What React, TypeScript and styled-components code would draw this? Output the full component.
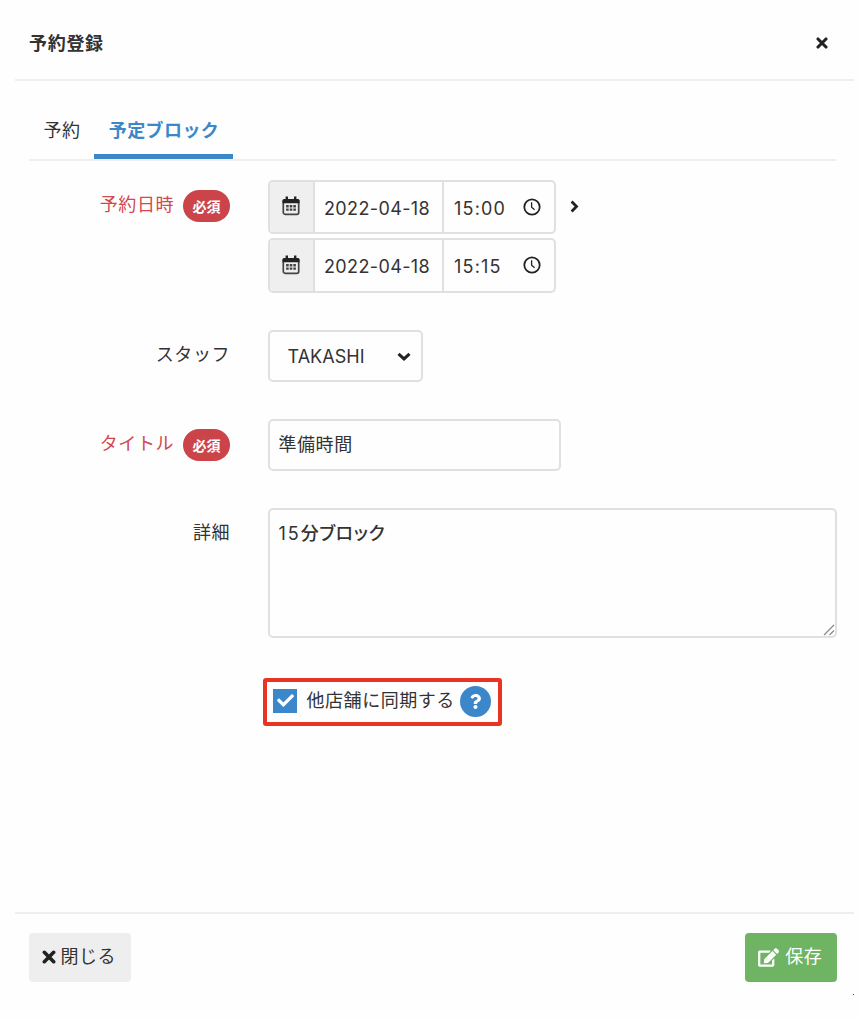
import React from "react";
import styled, { createGlobalStyle } from "styled-components";
import { FaCheck, FaEdit, FaQuestion } from "react-icons/fa";

const GlobalStyle = createGlobalStyle`
  *, *::before, *::after { box-sizing: border-box; }
  body { margin: 0; background: #fefefe; }
`;

const Dialog = styled.main`
  position: relative;
  display: flex;
  flex-direction: column;
  width: 839px;
  height: 1018px;
  margin-left: 15px;
  color: #333;
  font-family: Inter, "Noto Sans CJK JP", sans-serif;
  font-size: 18px;
  line-height: 26px;
  letter-spacing: 0.55px;
  white-space: nowrap;
`;

const Header = styled.header`
  display: flex;
  align-items: center;
  justify-content: space-between;
  height: 81px;
  padding: 7px 26px 0 14px;
  border-bottom: 2px solid #eee;
`;

const Title = styled.h1`
  margin: 0;
  padding-top: 2px;
  font-size: 18px;
  font-weight: 700;
  letter-spacing: 0.7px;
`;

const IconButton = styled.button`
  display: flex;
  padding: 0 0.5px 1px 0;
  border: 0;
  background: none;
  color: #222;
`;

const Tabs = styled.nav`
  display: flex;
  height: 80px;
  margin: 0 18px 0 14px;
  padding-top: 29px;
  border-bottom: 2px solid #eee;
`;

const Tab = styled.a<{ $active?: boolean }>`
  height: 49px;
  padding: 8px 14px 0 14.5px;
  color: ${(p) => (p.$active ? "#3c87c9" : "#333")};
  font-weight: ${(p) => (p.$active ? 700 : 400)};
  letter-spacing: 0.4px;
  border-bottom: ${(p) => (p.$active ? "5px solid #3c87c9" : "0")};
`;

const Form = styled.form`
  display: flex;
  flex-direction: column;
  flex: 1;
  gap: 37px;
  padding: 18.5px 17px 0 0;
`;

const Field = styled.div`
  display: grid;
  grid-template-columns: 215px 1fr;
  column-gap: 37.5px;
  align-items: start;
`;

const Label = styled.label<{ $required?: boolean }>`
  display: flex;
  justify-content: flex-end;
  gap: 9px;
  padding-top: 12px;
  color: ${(p) => (p.$required ? "#d2484f" : "#333")};
`;

const Badge = styled.span`
  width: 47px;
  height: 32px;
  margin-top: -2px;
  border-radius: 16px;
  background: #cb444a;
  color: #fff;
  font-size: 14px;
  font-weight: 700;
  line-height: 33px;
  letter-spacing: 0;
  text-align: center;
`;

const DateRange = styled.div`
  display: flex;
  gap: 14px;
`;

const DateList = styled.div`
  display: flex;
  flex-direction: column;
  gap: 4px;
`;

const DateGroup = styled.div`
  display: flex;
  width: 288px;
  height: 54.5px;
  border: 2px solid #e0e0e0;
  border-radius: 5px;
  overflow: hidden;
`;

const CalendarBox = styled.span`
  display: flex;
  align-items: center;
  justify-content: center;
  width: 45px;
  padding-bottom: 1px;
  background: #efefef;
  border-right: 2px solid #e0e0e0;
`;

const DateValue = styled.span`
  display: flex;
  align-items: center;
  width: 129px;
  padding: 4px 0 0 9.5px;
  border-right: 2px solid #e0e0e0;
  letter-spacing: 0.38px;
`;

const TimeValue = styled.span`
  display: flex;
  flex: 1;
  align-items: center;
  justify-content: space-between;
  padding: 4px 13px 0 10.5px;
  letter-spacing: 1.2px;

  svg { margin-top: -4px; }
`;

const RangeMark = styled.span`
  display: flex;
  padding-top: 20px;
  color: #222;
`;

const Select = styled.div`
  display: flex;
  align-items: center;
  justify-content: space-between;
  width: 155px;
  height: 52px;
  padding: 2px 10px 0 18px;
  border: 2px solid #e0e0e0;
  border-radius: 5px;
  letter-spacing: 0.05px;
`;

const TextBox = styled.div<{ $width: number; $height: number; $medium?: boolean }>`
  position: relative;
  width: ${(p) => p.$width}px;
  height: ${(p) => p.$height}px;
  padding: 11px 9px;
  border: 2px solid #e0e0e0;
  border-radius: 5px;
  font-weight: ${(p) => (p.$medium ? 500 : 400)};
  font-feature-settings: ${(p) => (p.$medium ? '"palt"' : "normal")};
`;

const Digits = styled.span`
  font-weight: 400;
  letter-spacing: 2px;
`;

const Grip = styled.svg`
  position: absolute;
  right: 0;
  bottom: 0;
`;

const SyncOption = styled.label`
  display: flex;
  align-items: center;
  width: 239px;
  height: 48px;
  margin: 3px 0 0 248px;
  padding: 0 0 2px 6px;
  border: 4px solid #e93323;
  border-radius: 3px;
`;

const Checkbox = styled.span`
  display: flex;
  align-items: center;
  justify-content: center;
  width: 24px;
  height: 24px;
  margin-right: 9.5px;
  background: #3c87c9;
  color: #fff;
  font-size: 17px;
`;

const HelpBadge = styled.span`
  display: flex;
  align-items: center;
  justify-content: center;
  width: 31px;
  height: 31px;
  margin: 1px 0 0 5.5px;
  border-radius: 50%;
  background: #3c87c9;
  color: #fff;
  font-size: 15px;
`;

const Footer = styled.footer`
  display: flex;
  justify-content: space-between;
  height: 106px;
  padding: 19px 17.5px 0 13.5px;
  border-top: 2px solid #eee;
`;

const Button = styled.button<{ $primary?: boolean }>`
  display: flex;
  align-items: center;
  justify-content: center;
  gap: ${(p) => (p.$primary ? 6 : 4)}px;
  width: ${(p) => (p.$primary ? 92 : 102)}px;
  height: 48.5px;
  padding: 0 0.5px 0.5px 0;
  border: 0;
  border-radius: 4px;
  background: ${(p) => (p.$primary ? "#6eb462" : "#eee")};
  color: ${(p) => (p.$primary ? "#fff" : "#333")};
  font: inherit;
  letter-spacing: 0.55px;
`;

const CornerMark = styled.span`
  position: absolute;
  right: 0;
  top: 994px;
  width: 1px;
  height: 1px;
  background: #555;
`;

const CalendarIcon = () => (
  <svg width="18" height="20" viewBox="0 0 18 20" fill="none">
    <rect x="1.3" y="3.8" width="15.4" height="14.5" rx="1.8" stroke="#444" strokeWidth="1.7" />
    <path d="M.5 7.2V4.6Q.5 3 2.1 3h13.8Q17.5 3 17.5 4.6V7.2Z" fill="#222" />
    <path d="M4.8 .6v4M13.2 .6v4" stroke="#222" strokeWidth="2.4" />
    <path d="M4.1 10.3h10M4.1 13.6h10" stroke="#444" strokeWidth="2.4" strokeDasharray="2.6 1" />
  </svg>
);

const ClockIcon = () => (
  <svg width="18" height="18" viewBox="0 0 18 18" fill="none" stroke="#222">
    <circle cx="9" cy="9" r="7.7" strokeWidth="1.8" />
    <path d="M8.6 4.2v5l3 2.5" strokeWidth="1.3" />
  </svg>
);

const CrossIcon = ({ size }: { size: number }) => (
  <svg width={size} height={size} viewBox="0 0 12 12" stroke="#222" strokeWidth="3.1" strokeLinecap="round">
    <path d="M2 2l8 8M10 2l-8 8" />
  </svg>
);

const ChevronRight = () => (
  <svg width="9" height="13" viewBox="0 0 9 13" fill="none" stroke="#222" strokeWidth="2.8">
    <path d="M1.6 1.5 6.5 6.5 1.6 11.5" />
  </svg>
);

const ChevronDown = () => (
  <svg width="14" height="9" viewBox="0 0 14 9" fill="none" stroke="#222" strokeWidth="3">
    <path d="M1.5 1.8 7 6.9 12.5 1.8" />
  </svg>
);

const DateTime = ({ date, time }: { date: string; time: string }) => (
  <DateGroup>
    <CalendarBox><CalendarIcon /></CalendarBox>
    <DateValue>{date}</DateValue>
    <TimeValue>{time}<ClockIcon /></TimeValue>
  </DateGroup>
);

export default function App() {
  return (
    <>
      <GlobalStyle />
      <Dialog>
        <Header>
          <Title>予約登録</Title>
          <IconButton aria-label="close"><CrossIcon size={12} /></IconButton>
        </Header>
        <Tabs>
          <Tab>予約</Tab>
          <Tab $active>予定ブロック</Tab>
        </Tabs>
        <Form>
          <Field>
            <Label $required>予約日時<Badge>必須</Badge></Label>
            <DateRange>
              <DateList>
                <DateTime date="2022-04-18" time="15:00" />
                <DateTime date="2022-04-18" time="15:15" />
              </DateList>
              <RangeMark><ChevronRight /></RangeMark>
            </DateRange>
          </Field>
          <Field>
            <Label>スタッフ</Label>
            <Select>TAKASHI<ChevronDown /></Select>
          </Field>
          <Field>
            <Label $required>タイトル<Badge>必須</Badge></Label>
            <TextBox $width={293} $height={52}>準備時間</TextBox>
          </Field>
          <Field>
            <Label>詳細</Label>
            <TextBox $width={569} $height={130} $medium>
              <Digits>15</Digits>分ブロック
              <Grip width="12" height="12" viewBox="0 0 12 12" stroke="#888" strokeWidth="1.2">
                <path d="M1 11 11 1M6.5 11 11 6.5" />
              </Grip>
            </TextBox>
          </Field>
          <SyncOption>
            <Checkbox><FaCheck /></Checkbox>
            他店舗に同期する
            <HelpBadge><FaQuestion /></HelpBadge>
          </SyncOption>
        </Form>
        <Footer>
          <Button><CrossIcon size={14} />閉じる</Button>
          <Button $primary><FaEdit size={21} />保存</Button>
        </Footer>
        <CornerMark />
      </Dialog>
    </>
  );
}
